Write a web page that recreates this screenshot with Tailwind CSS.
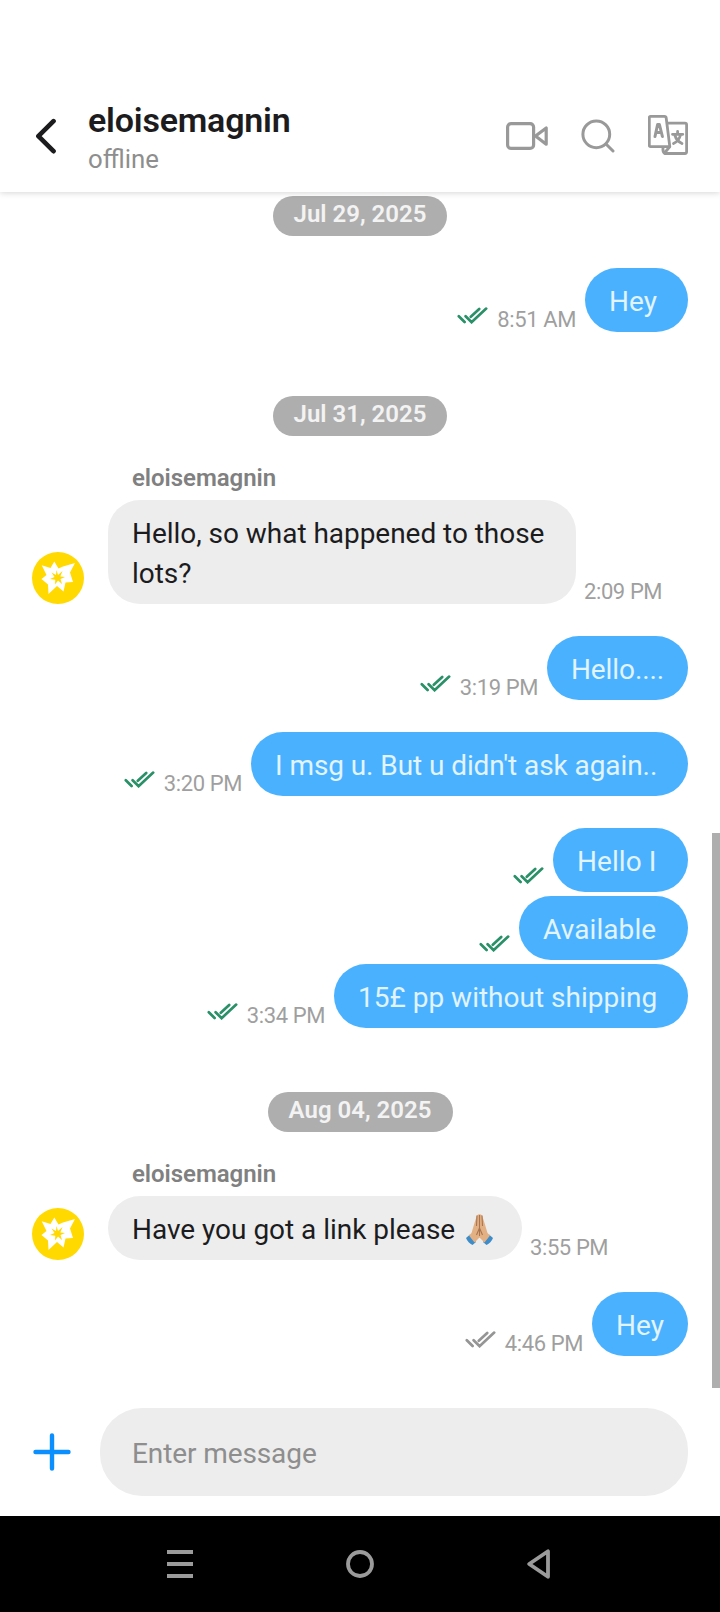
<!DOCTYPE html>
<html lang="en">
<head>
<meta charset="utf-8">
<title>eloisemagnin</title>
<script src="https://cdn.jsdelivr.net/npm/@tailwindcss/browser@4"></script>
</head>
<body class="bg-white font-['Roboto',sans-serif]">
<svg class="hidden">
  <symbol id="ticks" viewBox="0 0 31 17"><g fill="none" stroke="currentColor" stroke-width="2.7" stroke-linecap="round"><path d="M1.8 9.2 7.6 15M8.6 9.2 14.6 15.200 29.200 1.6M13.8 9.8 22.200 1.9"/></g></symbol>
  <symbol id="burst" viewBox="0 0 52 52"><circle cx="26" cy="26" r="26" fill="#ffd900"/><path fill="#fff" d="M9.700 13.300 18.500 16 22.300 9.500 26.500 16.500 31 14.500 43 11 38 20.500 41 30 33.500 30.500 31.500 39.500 25 34 16.500 42 16 32.500 9.500 27 14.500 23Z"/><path fill="#ffd900" d="M24.500 18 26 23 30.500 19 28.300 24.500 33 25 28.500 27 30 32 26 28.600 23 32.500 23.300 27.800 18 27 22.500 25 19.500 20.500 24 23Z"/></symbol>
</svg>
<div class="relative flex h-[1612px] w-[720px] flex-col overflow-hidden bg-white">
  <header class="relative z-10 flex h-[192px] shrink-0 items-start bg-white pr-8 pl-9 shadow-[0_1px_6px_rgba(0,0,0,0.16)]">
    <svg class="mt-[118px] h-9 w-5 shrink-0" viewBox="0 0 20 36" fill="none" stroke="#1c1c1e" stroke-width="4.700" stroke-linecap="round" stroke-linejoin="round"><path d="M17.500 3.200 2.400 18.200 17.500 33.200"/></svg>
    <div class="mt-[100px] ml-8 flex-1">
      <div class="text-[34px] leading-10 font-semibold tracking-[-0.2px] whitespace-nowrap text-[#1c1c1e]"><span>eloisemagnin</span></div>
      <div class="mt-1 text-[25.8px] leading-[30px] whitespace-nowrap text-[#8e8e8e]"><span>offline</span></div>
    </div>
    <svg class="mt-[122px] h-7 w-[42px]" viewBox="0 0 42 28" fill="none" stroke="#999" stroke-width="3.200" stroke-linejoin="round"><rect x="1.600" y="1.600" width="26" height="24.800" rx="3.500"/><path d="M29.500 14 40.200 6V22.200Z"/></svg>
    <svg class="mt-[119px] ml-[33px] h-[34px] w-[34px]" viewBox="0 0 34 34" fill="none" stroke="#999" stroke-width="3" stroke-linecap="round"><circle cx="15.300" cy="15.300" r="13.400"/><path d="M25 25 32 32"/></svg>
    <svg class="mt-[115px] ml-[33px] h-10 w-10" viewBox="0 0 40 40" fill="none" stroke="#999" stroke-width="2.800" stroke-linejoin="round" stroke-linecap="round"><path d="M2.500 1.400H16.500Q18 1.400 18.200 3L21.800 31.600H2.500Q1.300 31.600 1.300 30.400V2.600Q1.300 1.400 2.500 1.400Z"/><path d="M19.500 8.200H37Q38.600 8.200 38.600 9.800V36.800Q38.600 38.500 37 38.500H16.500Q14.500 37 15 32.500M21.500 32 16.500 38"/><path stroke-width="3" d="M7 21.500 9.600 9.500H11.400L14.400 21.500M8.200 17.500H13.400"/><path stroke-width="2.800" d="M24.500 19.300H34.800M29.600 16.500V19M32.500 20Q31 26 25.500 28.500M26.800 20Q28.500 26 34 28.500"/></svg>
  </header>

  <main class="flex flex-1 flex-col pr-8 pl-8">
    <div class="mt-1 flex h-10 w-[174px] justify-center self-center rounded-full bg-[#aeaeae] text-[24px] leading-[37px] font-semibold text-[#f3f3f3]"><span>Jul 29, 2025</span></div>

    <div class="mt-8 flex items-end justify-end">
      <svg class="mr-[9px] mb-2 h-[17px] w-[31px] text-[#2a9068]"><use href="#ticks"/></svg>
      <span class="mr-[9px] -mb-px text-[22px] leading-[26px] tracking-[-0.4px] text-[#9f9f9f]">8:51 AM</span>
      <div class="w-[103px] rounded-[32px] bg-[#4ab1ff] pt-[14px] pb-[10px] pl-6 text-[28px] leading-10 whitespace-pre text-[#e1f4ff]"><span>Hey</span></div>
    </div>

    <div class="mt-16 flex h-10 w-[174px] justify-center self-center rounded-full bg-[#aeaeae] text-[24px] leading-[37px] font-semibold text-[#f3f3f3]"><span>Jul 31, 2025</span></div>

    <div class="mt-7 ml-[100px] text-[24px] leading-7 font-semibold tracking-[-0.05px] text-[#808080]"><span>eloisemagnin</span></div>
    <div class="mt-2 flex items-end">
      <svg class="mr-6 h-[52px] w-[52px]"><use href="#burst"/></svg>
      <div class="w-[468px] rounded-[32px] bg-[#ededed] pt-[14px] pb-[10px] pl-6 text-[28px] leading-10 tracking-[-0.04px] whitespace-nowrap text-[#1c1c1e]"><span>Hello, so what happened to those<br>lots?</span></div>
      <span class="-mb-px ml-2 text-[22px] leading-[26px] tracking-[-0.4px] text-[#9f9f9f]">2:09 PM</span>
    </div>

    <div class="mt-8 flex items-end justify-end">
      <svg class="mr-[9px] mb-2 h-[17px] w-[31px] text-[#2a9068]"><use href="#ticks"/></svg>
      <span class="mr-[9px] -mb-px text-[22px] leading-[26px] tracking-[-0.4px] text-[#9f9f9f]">3:19 PM</span>
      <div class="w-[141px] rounded-[32px] bg-[#4ab1ff] pt-[14px] pb-[10px] pl-6 text-[28px] leading-10 tracking-[-0.1px] whitespace-pre text-[#e1f4ff]"><span>Hello....</span></div>
    </div>

    <div class="mt-8 flex items-end justify-end">
      <svg class="mr-[9px] mb-2 h-[17px] w-[31px] text-[#2a9068]"><use href="#ticks"/></svg>
      <span class="mr-[9px] -mb-px text-[22px] leading-[26px] tracking-[-0.4px] text-[#9f9f9f]">3:20 PM</span>
      <div class="w-[437px] rounded-[32px] bg-[#4ab1ff] pt-[14px] pb-[10px] pl-6 text-[28px] leading-10 tracking-[-0.08px] whitespace-pre text-[#e1f4ff]"><span>I msg u. But u didn't ask again..</span></div>
    </div>

    <div class="mt-8 flex items-end justify-end">
      <svg class="mr-[9px] mb-2 h-[17px] w-[31px] text-[#2a9068]"><use href="#ticks"/></svg>
      <div class="w-[135px] rounded-[32px] bg-[#4ab1ff] pt-[14px] pb-[10px] pl-6 text-[28px] leading-10 tracking-[0.05px] whitespace-pre text-[#e1f4ff]"><span>Hello I</span></div>
    </div>
    <div class="mt-1 flex items-end justify-end">
      <svg class="mr-[9px] mb-2 h-[17px] w-[31px] text-[#2a9068]"><use href="#ticks"/></svg>
      <div class="w-[169px] rounded-[32px] bg-[#4ab1ff] pt-[14px] pb-[10px] pl-6 text-[28px] leading-10 tracking-[0.1px] whitespace-pre text-[#e1f4ff]"><span>Available</span></div>
    </div>
    <div class="mt-1 flex items-end justify-end">
      <svg class="mr-[9px] mb-2 h-[17px] w-[31px] text-[#2a9068]"><use href="#ticks"/></svg>
      <span class="mr-[9px] -mb-px text-[22px] leading-[26px] tracking-[-0.4px] text-[#9f9f9f]">3:34 PM</span>
      <div class="w-[354px] rounded-[32px] bg-[#4ab1ff] pt-[14px] pb-[10px] pl-6 text-[28px] leading-10 whitespace-pre text-[#e1f4ff]"><span>15£ pp without shipping</span></div>
    </div>

    <div class="mt-16 flex h-10 w-[185px] justify-center self-center rounded-full bg-[#aeaeae] text-[24px] leading-[37px] font-semibold text-[#f3f3f3]"><span>Aug 04, 2025</span></div>

    <div class="mt-7 ml-[100px] text-[24px] leading-7 font-semibold tracking-[-0.05px] text-[#808080]"><span>eloisemagnin</span></div>
    <div class="mt-2 flex items-end">
      <svg class="mr-6 h-[52px] w-[52px]"><use href="#burst"/></svg>
      <div class="flex w-[414px] rounded-[32px] bg-[#ededed] pt-[14px] pb-[10px] pl-6 text-[28px] leading-10 tracking-[-0.02px] whitespace-nowrap text-[#1c1c1e]"><span>Have you got a link please</span>
        <svg class="mt-[4px] ml-[11px] h-[31px] w-[27px]" viewBox="0 0 27 31"><path fill="#3f8dc8" d="M0 24 4 20.500 10 28 6.500 31Q2 29 0 24ZM27 24 23 20.500 17 28 20.500 31Q25 29 27 24Z"/><path fill="#e3b083" d="M11 1.200Q13.500-.500 16 1.200L18.500 9 21.500 19 24 21.500 18.500 28.500 13.500 23.500 8.500 28.500 3 21.500 5.500 19 8.500 9Z"/><path fill="none" stroke="#a97550" stroke-width="1.100" d="M13.500 1V22M11 1.500 10.500 12M16 1.500 16.500 12M13.500 14 10.500 21M13.500 14 16.500 21"/></svg>
      </div>
      <span class="-mb-px ml-2 text-[22px] leading-[26px] tracking-[-0.4px] text-[#9f9f9f]">3:55 PM</span>
    </div>

    <div class="mt-8 flex items-end justify-end">
      <svg class="mr-[9px] mb-2 h-[17px] w-[31px] text-[#959595]"><use href="#ticks"/></svg>
      <span class="mr-[9px] -mb-px text-[22px] leading-[26px] tracking-[-0.4px] text-[#9f9f9f]">4:46 PM</span>
      <div class="w-24 rounded-[32px] bg-[#4ab1ff] pt-[14px] pb-[10px] pl-6 text-[28px] leading-10 whitespace-pre text-[#e1f4ff]"><span>Hey</span></div>
    </div>
  </main>
  <div class="absolute top-[833px] right-0 h-[555px] w-2 bg-[#aeaeae]"></div>

  <footer class="flex h-[108px] shrink-0 items-start pr-8 pl-8">
    <svg class="mt-6 h-10 w-10" viewBox="0 0 40 40" fill="none" stroke="#0b8fff" stroke-width="4.400" stroke-linecap="round"><path d="M20 3.500V36.500M3.500 20H36.500"/></svg>
    <div class="ml-7 h-[88px] flex-1 rounded-[42px] bg-[#ededed] pt-[26px] pl-8 text-[28px] leading-10 tracking-[-0.1px] text-[#8e8e8e]"><span>Enter message</span></div>
  </footer>
  <nav class="flex h-24 shrink-0 items-center bg-black text-[#9b9b9b]">
    <svg class="ml-[167px] h-7 w-[26px]" viewBox="0 0 26 28" fill="currentColor"><path d="M0 0H26V4H0ZM0 12H26V16H0ZM0 24H26V28H0Z"/></svg>
    <svg class="ml-[153px] h-7 w-7" viewBox="0 0 28 28" fill="none" stroke="currentColor" stroke-width="3.800"><circle cx="14" cy="14" r="12"/></svg>
    <svg class="ml-[153px] h-[30px] w-[23px]" viewBox="0 0 23 30" fill="none" stroke="currentColor" stroke-width="3.800" stroke-linejoin="round"><path d="M21 2.200V27.800L2.200 15Z"/></svg>
  </nav>
</div>
</body>
</html>
